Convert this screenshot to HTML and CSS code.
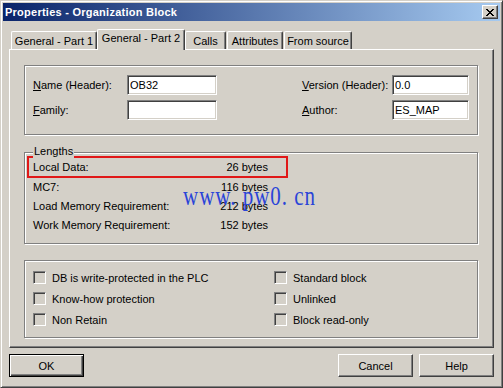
FILE: index.html
```html
<!DOCTYPE html>
<html lang="en">
<head>
<meta charset="UTF-8">
<meta name="viewport" content="width=device-width, initial-scale=1.0">
<title>Properties - Organization Block</title>
<link rel="stylesheet" href="styles.css">
</head>
<body>

<div class="window">
    <div class="titlebar">
        <span class="title">Properties - Organization Block</span>
        <span class="close-btn">
            <svg width="8" height="7" viewBox="0 0 8 7" shape-rendering="crispEdges"><path d="M0 0h2v1h1v1h2v-1h1v-1h2v1h-1v1h-1v1h-1v1h1v1h1v1h1v1h-2v-1h-1v-1h-2v1h-1v1h-2v-1h1v-1h1v-1h1v-1h-1v-1h-1v-1h-1z" fill="#000"/></svg>
        </span>
    </div>

    <div class="main">
        <div class="tabs">
            <div class="tab tab-part1">General - Part 1</div>
            <div class="tab tab-part2 active">General - Part 2</div>
            <div class="tab tab-calls">Calls</div>
            <div class="tab tab-attr">Attributes</div>
            <div class="tab tab-source">From source</div>
        </div>

        <div class="panel">
            <!-- header fields -->
            <div class="group header-group">
                <div class="field-col">
                    <div class="field-row">
                        <span class="label label-left"><u>N</u>ame (Header):</span>
                        <input class="text-input input-left" type="text" value="OB32" readonly>
                    </div>
                    <div class="field-row">
                        <span class="label label-left"><u>F</u>amily:</span>
                        <input class="text-input input-left" type="text" value="" readonly>
                    </div>
                </div>
                <div class="field-col">
                    <div class="field-row">
                        <span class="label label-right"><u>V</u>ersion (Header):</span>
                        <input class="text-input input-right" type="text" value="0.0" readonly>
                    </div>
                    <div class="field-row">
                        <span class="label label-right"><u>A</u>uthor:</span>
                        <input class="text-input input-right" type="text" value="ES_MAP" readonly>
                    </div>
                </div>
            </div>

            <!-- lengths -->
            <div class="group lengths-group">
                <span class="group-title">Lengths</span>
                <div class="len-row marked"><span>Local Data:</span><span>26 bytes</span></div>
                <div class="len-row"><span>MC7:</span><span>116 bytes</span></div>
                <div class="len-row"><span>Load Memory Requirement:</span><span>212 bytes</span></div>
                <div class="len-row"><span>Work Memory Requirement:</span><span>152 bytes</span></div>
                <span class="watermark">www. pw0. cn</span>
            </div>

            <!-- flags -->
            <div class="group checks-group">
                <div class="check"><span class="box"></span>DB is write-protected in the PLC</div>
                <div class="check"><span class="box"></span>Standard block</div>
                <div class="check"><span class="box"></span>Know-how protection</div>
                <div class="check"><span class="box"></span>Unlinked</div>
                <div class="check"><span class="box"></span>Non Retain</div>
                <div class="check"><span class="box"></span>Block read-only</div>
            </div>
        </div>

        <div class="buttons">
            <button class="btn btn-default">OK</button>
            <div class="btn-group">
                <button class="btn">Cancel</button>
                <button class="btn">Help</button>
            </div>
        </div>
    </div>
</div>

</body>
</html>
```

FILE: styles.css
```css
body {
    margin: 0;
    padding: 0;
    background-color: #d4d0c8;
    font-family: "Liberation Sans", Arial, sans-serif;
    font-size: 11px;
    color: #000;
}

.window {
    width: 503px;
    height: 388px;
    box-sizing: border-box;
    padding: 2px;
    border: 1px solid;
    border-color: #d4d0c8 #404040 #404040 #d4d0c8;
    box-shadow: inset 1px 1px 0 #fff, inset -1px -1px 0 #808080;
    background-color: #d4d0c8;
}

.titlebar {
    height: 18px;
    display: flex;
    align-items: center;
    justify-content: space-between;
    background: linear-gradient(to right, #0a246a, #a6caf0);
}

.title {
    color: #fff;
    font-weight: bold;
    letter-spacing: 0.25px;
    padding-left: 2px;
    line-height: 18px;
}

.close-btn {
    width: 16px;
    height: 14px;
    margin-right: 2px;
    box-sizing: border-box;
    display: flex;
    align-items: center;
    justify-content: center;
    background-color: #d4d0c8;
    border: 1px solid;
    border-color: #fff #404040 #404040 #fff;
    box-shadow: inset -1px -1px 0 #808080;
}

.main {
    padding-left: 6px;
}

/* tabs */
.tabs {
    display: flex;
    align-items: flex-end;
    height: 20px;
    margin-top: 8px;
}

.tab {
    box-sizing: border-box;
    height: 18px;
    padding-top: 1px;
    line-height: 16px;
    text-align: center;
    white-space: nowrap;
    border: 1px solid;
    border-bottom: none;
    border-color: #fff #404040 #404040 #fff;
    border-radius: 2px 2px 0 0;
    box-shadow: inset -1px 0 0 #808080;
    background-color: #d4d0c8;
}

.tab-part1 { width: 86px; margin-left: 2px; }
.tab-part2 { width: 88px; }
.tab-calls { width: 41px; }
.tab-attr { width: 56px; margin-left: 1px; }
.tab-source { width: 68px; margin-left: 1px; }

.tab.active {
    height: 21px;
    padding-top: 0;
    margin-bottom: -1px;
    position: relative;
    z-index: 1;
}

.panel {
    width: 485px;
    height: 299px;
    box-sizing: border-box;
    padding: 15px 0 0 14px;
    border: 1px solid;
    border-color: #fff #404040 #404040 #fff;
    box-shadow: inset -1px -1px 0 #808080;
}

/* etched group box */
.group {
    position: relative;
    width: 454px;
    box-sizing: border-box;
    border: 1px solid #808080;
    box-shadow: inset 1px 1px 0 #fff, 1px 1px 0 #fff;
}

.header-group {
    height: 70px;
    padding: 9px 8px 0 8px;
    display: flex;
    justify-content: space-between;
}

.field-row {
    display: flex;
    align-items: center;
    height: 20px;
    margin-bottom: 5px;
}

.label-left { width: 94px; }
.label-right { width: 90px; }

.text-input {
    height: 20px;
    box-sizing: border-box;
    padding: 0 2px;
    font-family: inherit;
    font-size: 11px;
    color: #000;
    background-color: #fff;
    border: 1px solid;
    border-color: #808080 #fff #fff #808080;
    box-shadow: inset 1px 1px 0 #404040, inset -1px -1px 0 #d4d0c8;
    outline: none;
}

.input-left { width: 90px; }
.input-right { width: 77px; }

.lengths-group {
    height: 92px;
    margin-top: 17px;
    padding: 3px 0 0 2px;
}

.group-title {
    position: absolute;
    top: -8px;
    left: 8px;
    padding: 0 1px;
    line-height: 13px;
    background-color: #d4d0c8;
}

.len-row {
    width: 261px;
    box-sizing: border-box;
    display: flex;
    justify-content: space-between;
    height: 19px;
    line-height: 19px;
    padding: 0 20px 0 6px;
}

.len-row.marked {
    height: 22px;
    line-height: 18px;
    padding: 0 18px 0 4px;
    border: 2px solid #e01818;
}

.watermark {
    position: absolute;
    left: 158px;
    top: 28px;
    font-family: "Liberation Serif", serif;
    font-size: 21px;
    letter-spacing: 1px;
    color: #2a44d8;
    transform: scaleY(1.25);
    transform-origin: left top;
    white-space: pre;
}

.checks-group {
    height: 78px;
    margin-top: 16px;
    padding: 6px 0 0 8px;
    display: grid;
    grid-template-columns: 241px 1fr;
    grid-auto-rows: 21px;
}

.check {
    display: flex;
    align-items: center;
}

.box {
    width: 13px;
    height: 13px;
    box-sizing: border-box;
    margin-right: 6px;
    background-color: #d4d0c8;
    border: 1px solid;
    border-color: #808080 #fff #fff #808080;
    box-shadow: inset 1px 1px 0 #404040, inset -1px -1px 0 #d4d0c8;
}

/* bottom buttons */
.buttons {
    width: 485px;
    margin-top: 6px;
    display: flex;
    justify-content: space-between;
}

.btn-group {
    display: flex;
    gap: 6px;
}

.btn {
    width: 75px;
    height: 23px;
    box-sizing: border-box;
    padding: 0;
    font-family: inherit;
    font-size: 11px;
    color: #000;
    background-color: #d4d0c8;
    border: 1px solid;
    border-color: #fff #404040 #404040 #fff;
    box-shadow: inset -1px -1px 0 #808080;
}

.btn-default {
    border: 1px solid #000;
    box-shadow: inset 1px 1px 0 #fff, inset -1px -1px 0 #404040, inset -2px -2px 0 #808080;
}
```
